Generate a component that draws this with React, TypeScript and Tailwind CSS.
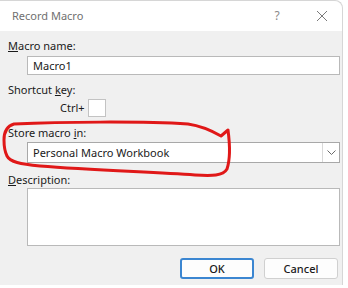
export default function App() {
  const font = { fontFamily: '"Noto Sans", "Open Sans", sans-serif' };
  return (
    <div className="relative w-[348px] h-[288px] bg-white overflow-hidden text-[11px] text-[#1a1a1a]" style={font}>
      <div className="w-[343px] h-[285px] flex flex-col rounded-tr-[8px] border-r border-t border-[#d6d6d6] bg-[#f0f0f0]">
        <div className="h-[30px] shrink-0 bg-white rounded-tr-[8px] flex items-center pl-[12px] text-[#707070]">
          <span className="flex-1">Record Macro</span>
          <span className="w-[20px] text-center text-[12px] text-[#8a8a8a] mr-[29px]">?</span>
          <svg width="12" height="12" viewBox="0 0 12 12" className="mr-[14px]">
            <path d="M1 1 L11 11 M11 1 L1 11" stroke="#7a7a7a" strokeWidth="1" fill="none" />
          </svg>
        </div>
        <div className="flex flex-col pl-[8px] pt-[7px]">
          <div className="h-[16px] leading-[16px]"><span className="underline">M</span>acro name:</div>
          <div className="ml-[19px] mt-[2px] w-[313px] h-[19px] bg-white border border-[#b9b9b9] pl-[5px] leading-[17px]">Macro1</div>
          <div className="mt-[7px] h-[16px] leading-[16px]">Shortcut <span className="underline">k</span>ey:</div>
          <div className="mt-[1px] flex items-center h-[18px]">
            <span className="ml-[52px] w-[26px]">Ctrl+</span>
            <div className="ml-[2px] w-[18px] h-[18px] bg-white border border-[#c3c3c3]" />
          </div>
          <div className="mt-[8px] h-[16px] leading-[16px]">Store macro <span className="underline">i</span>n:</div>
          <div className="ml-[19px] mt-[1px] w-[313px] h-[21px] bg-white border border-[#a8a8a8] flex">
            <span className="flex-1 pl-[5px] leading-[19px]">Personal Macro Workbook</span>
            <div className="w-[17px] border-l border-[#d9d9d9] flex items-center justify-center">
              <svg width="9" height="6" viewBox="0 0 9 6">
                <path d="M0.5 0.5 L4.5 4.5 L8.5 0.5" stroke="#6a6a6a" strokeWidth="1" fill="none" />
              </svg>
            </div>
          </div>
          <div className="mt-[9px] h-[16px] leading-[16px]"><span className="underline">D</span>escription:</div>
          <div className="ml-[19px] w-[313px] h-[58px] bg-white border border-[#b9b9b9]" />
          <div className="mt-[12px] flex gap-[10px] ml-[172px]">
            <button className="w-[74px] h-[21px] rounded-[3px] border-2 border-[#3b86d1] bg-[#fdfdfd] text-[11px] font-medium text-[#1a1a1a] leading-[17px]">OK</button>
            <button className="w-[74px] h-[21px] rounded-[3px] border border-[#d0d0d0] bg-[#fdfdfd] text-[11px] font-medium text-[#1a1a1a] leading-[19px]">Cancel</button>
          </div>
        </div>
      </div>
      <svg className="absolute left-0 top-0 pointer-events-none" width="348" height="288" viewBox="0 0 348 288">
        <path
          d="M4 140 C4 132 7 126 14 124 C60 122 140 121 188 124 C202 126 214 132 221 136 L228 130 C230 145 230 160 227 169 C223 176 212 176 195 175 C150 172 90 170 40 166 C20 164 10 162 7 156 C4 150 4 145 4 140 Z"
          stroke="#e01818"
          strokeWidth="3"
          fill="none"
          strokeLinejoin="round"
        />
      </svg>
    </div>
  );
}
